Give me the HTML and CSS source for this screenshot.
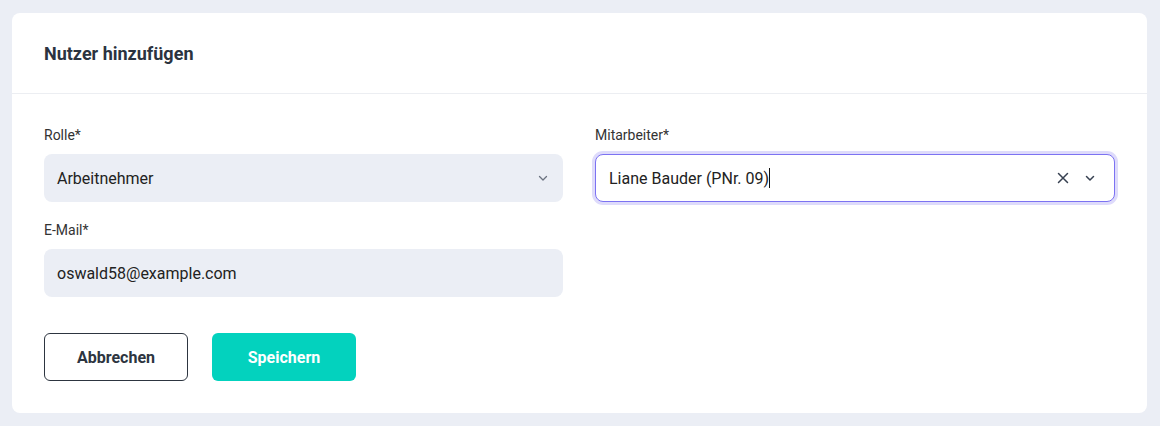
FILE: index.html
```html
<!DOCTYPE html>
<html lang="de">
<head>
<meta charset="utf-8">
<title>Nutzer hinzufügen</title>
<link rel="stylesheet" href="styles.css">
</head>
<body>
<div class="card">
  <div class="card-header">
    <h1 class="title">Nutzer hinzufügen</h1>
  </div>
  <div class="card-body">
    <div class="grid">
      <div class="field">
        <label class="label">Rolle*</label>
        <div class="control">
          <span class="value">Arbeitnehmer</span>
          <span class="icons">
            <svg class="chev" width="12" height="12" viewBox="0 0 12 12"><path d="M2.5 4.5 L6 8 L9.5 4.5" fill="none" stroke="#6b7280" stroke-width="1.3" stroke-linecap="round" stroke-linejoin="round"/></svg>
          </span>
        </div>
      </div>
      <div class="field">
        <label class="label">Mitarbeiter*</label>
        <div class="control focused">
          <span class="value">Liane Bauder (PNr. 09)<span class="caret"></span></span>
          <span class="icons">
            <svg class="clear" width="14" height="14" viewBox="0 0 14 14"><path d="M2.5 2.5 L11.5 11.5 M11.5 2.5 L2.5 11.5" fill="none" stroke="#374151" stroke-width="1.5" stroke-linecap="round"/></svg>
            <svg class="chev" width="12" height="12" viewBox="0 0 12 12"><path d="M2.5 4.5 L6 8 L9.5 4.5" fill="none" stroke="#374151" stroke-width="1.5" stroke-linecap="round" stroke-linejoin="round"/></svg>
          </span>
        </div>
      </div>
      <div class="field">
        <label class="label">E-Mail*</label>
        <div class="control">
          <span class="value">oswald58@example.com</span>
        </div>
      </div>
    </div>
    <div class="actions">
      <button class="btn btn-outline">Abbrechen</button>
      <button class="btn btn-primary">Speichern</button>
    </div>
  </div>
</div>
</body>
</html>
```
FILE: styles.css
```css
* { box-sizing: border-box; }
html, body { margin: 0; padding: 0; }
body {
  background: #ebeef5;
  font-family: Roboto, "Noto Sans", Arial, sans-serif;
  padding: 13px 13px 13px 12px;
  color: #222;
}
.card {
  background: #fff;
  border-radius: 8px;
  width: 1135px;
}
.card-header {
  height: 81px;
  border-bottom: 1px solid #eceef2;
  display: flex;
  align-items: center;
  padding: 0 32px;
}
.title {
  margin: 0;
  font-size: 18px;
  font-weight: 700;
  color: #2b3340;
}
.card-body {
  padding: 31px 32px 32px 32px;
}
.grid {
  display: grid;
  grid-template-columns: 519px 520px;
  column-gap: 32px;
  row-gap: 18px;
}
.field { display: flex; flex-direction: column; }
.label {
  font-size: 14px;
  line-height: 20px;
  color: #333;
  margin-bottom: 9px;
}
.control {
  height: 48px;
  background: #ebeef5;
  border-radius: 8px;
  display: flex;
  align-items: center;
  justify-content: space-between;
  padding: 0 14px 0 13px;
  font-size: 16px;
  color: #222;
}
.control.focused {
  background: #fff;
  border: 1px solid #7c72f2;
  box-shadow: 0 0 0 3px #dedbfb;
  padding: 0 18px 0 13px;
}
.value { display: inline-flex; align-items: center; }
.caret {
  display: inline-block;
  width: 1px;
  height: 20px;
  background: #111;
  margin-left: 0;
}
.icons { display: flex; align-items: center; gap: 14px; }
.chev, .clear { display: block; }
.actions {
  display: flex;
  gap: 24px;
  margin-top: 36px;
}
.btn {
  width: 144px;
  height: 48px;
  border-radius: 6px;
  font-family: Roboto, "Noto Sans", Arial, sans-serif;
  font-size: 16px;
  font-weight: 700;
  cursor: pointer;
}
.btn-outline {
  background: #fff;
  border: 1px solid #2d3540;
  color: #2d3540;
}
.btn-primary {
  background: #03d2be;
  border: none;
  color: #fff;
}
```
